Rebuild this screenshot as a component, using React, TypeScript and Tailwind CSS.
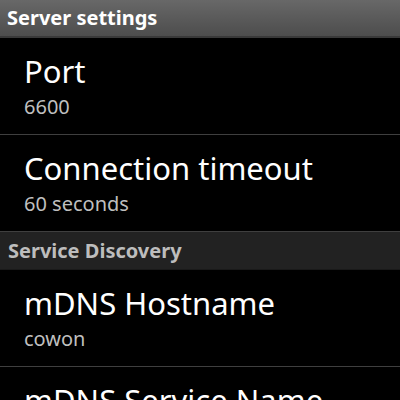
import React from "react";

function Row({ title, sub }: { title: string; sub?: string }) {
  return (
    <div className="h-[97px] shrink-0 border-b border-[#3f3f3f] pl-[24px] pt-[17px]">
      <div className="text-[31px] leading-[33px] text-white whitespace-nowrap">{title}</div>
      {sub && <div className="mt-[9px] text-[20px] leading-[20px] text-[#bfbfbf] whitespace-nowrap">{sub}</div>}
    </div>
  );
}

export default function App() {
  return (
    <div
      className="w-[400px] h-[400px] overflow-hidden bg-black flex flex-col"
      style={{ fontFamily: '"Noto Sans", "Open Sans", sans-serif' }}
    >
      <div className="h-[38px] shrink-0 flex items-center pl-[7px] bg-gradient-to-b from-[#686868] to-[#4d4d4d] border-b-2 border-[#393939] text-[20px] font-bold text-white leading-[36px]">
        Server settings
      </div>
      <Row title="Port" sub="6600" />
      <Row title="Connection timeout" sub="60 seconds" />
      <div className="h-[38px] shrink-0 flex items-center pl-[8px] bg-[#222222] border-b border-[#1a1a1a] text-[20px] font-bold text-[#bdbdbd] leading-[37px]">
        Service Discovery
      </div>
      <Row title="mDNS Hostname" sub="cowon" />
      <Row title="mDNS Service Name" />
    </div>
  );
}
